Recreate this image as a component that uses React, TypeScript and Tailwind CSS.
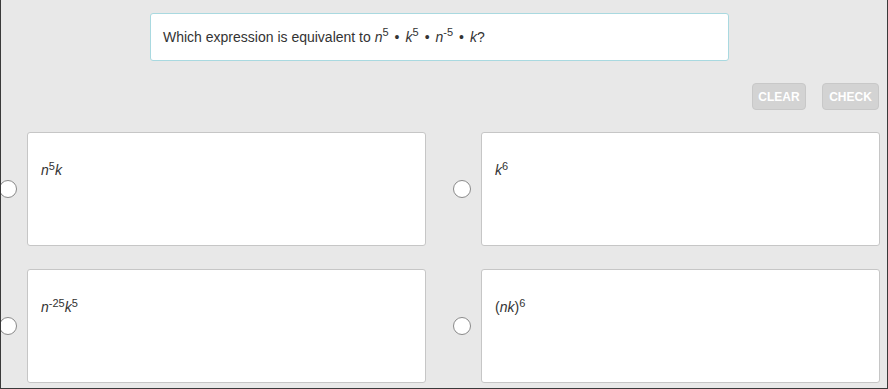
import React from "react";

type Opt = { id: string; body: React.ReactNode };

const V = ({ children }: { children: React.ReactNode }) => <i>{children}</i>;
const Sup = ({ children }: { children: React.ReactNode }) => (
  <sup className="text-[11px]">{children}</sup>
);
const Dot = () => <span className="mx-[6px]">•</span>;

const options: Opt[] = [
  {
    id: "a",
    body: (
      <>
        <V>n</V>
        <Sup>5</Sup>
        <V>k</V>
      </>
    ),
  },
  {
    id: "b",
    body: (
      <>
        <V>k</V>
        <Sup>6</Sup>
      </>
    ),
  },
  {
    id: "c",
    body: (
      <>
        <V>n</V>
        <Sup>-25</Sup>
        <V>k</V>
        <Sup>5</Sup>
      </>
    ),
  },
  {
    id: "d",
    body: (
      <>
        (<V>nk</V>)<Sup>6</Sup>
      </>
    ),
  },
];

export default function App() {
  return (
    <div className="w-[888px] h-[389px] overflow-hidden bg-[#e8e8e8] border-x border-b border-[#3a3a3a] font-['Liberation_Sans',Arial,sans-serif] text-[#333]">
      {/* question */}
      <div className="mt-[13px] ml-[149px] w-[579px] h-[48px] bg-white border border-[#a9d9e0] rounded-[3px] flex items-center pl-[12px] text-[14px]">
        <span>
          Which expression is equivalent to <V>n</V>
          <Sup>5</Sup>
          <Dot />
          <V>k</V>
          <Sup>5</Sup>
          <Dot />
          <V>n</V>
          <Sup>-5</Sup>
          <Dot />
          <V>k</V>?
        </span>
      </div>

      {/* actions */}
      <div className="mt-[22px] flex justify-end gap-[16px] pr-[8px]">
        <button className="w-[54px] h-[27px] rounded-[4px] bg-[#d3d3d3] border border-[#c8c8c8] text-white text-[12px] font-bold">
          CLEAR
        </button>
        <button className="w-[57px] h-[27px] rounded-[4px] bg-[#d3d3d3] border border-[#c8c8c8] text-white text-[12px] font-bold">
          CHECK
        </button>
      </div>

      {/* answers */}
      <div className="mt-[22px] -ml-[2px] grid grid-cols-[427px_427px] gap-x-[27px] gap-y-[23px]">
        {options.map((o) => (
          <label key={o.id} className="flex items-center">
            <span className="w-[18px] h-[18px] shrink-0 rounded-full bg-white border border-[#8a8a8a]" />
            <div className="ml-[10px] w-[399px] h-[114px] bg-white border border-[#c6c6c6] rounded-[3px] pl-[13px] pt-[27px] text-[14px] leading-[20px]">
              {o.body}
            </div>
          </label>
        ))}
      </div>
    </div>
  );
}
